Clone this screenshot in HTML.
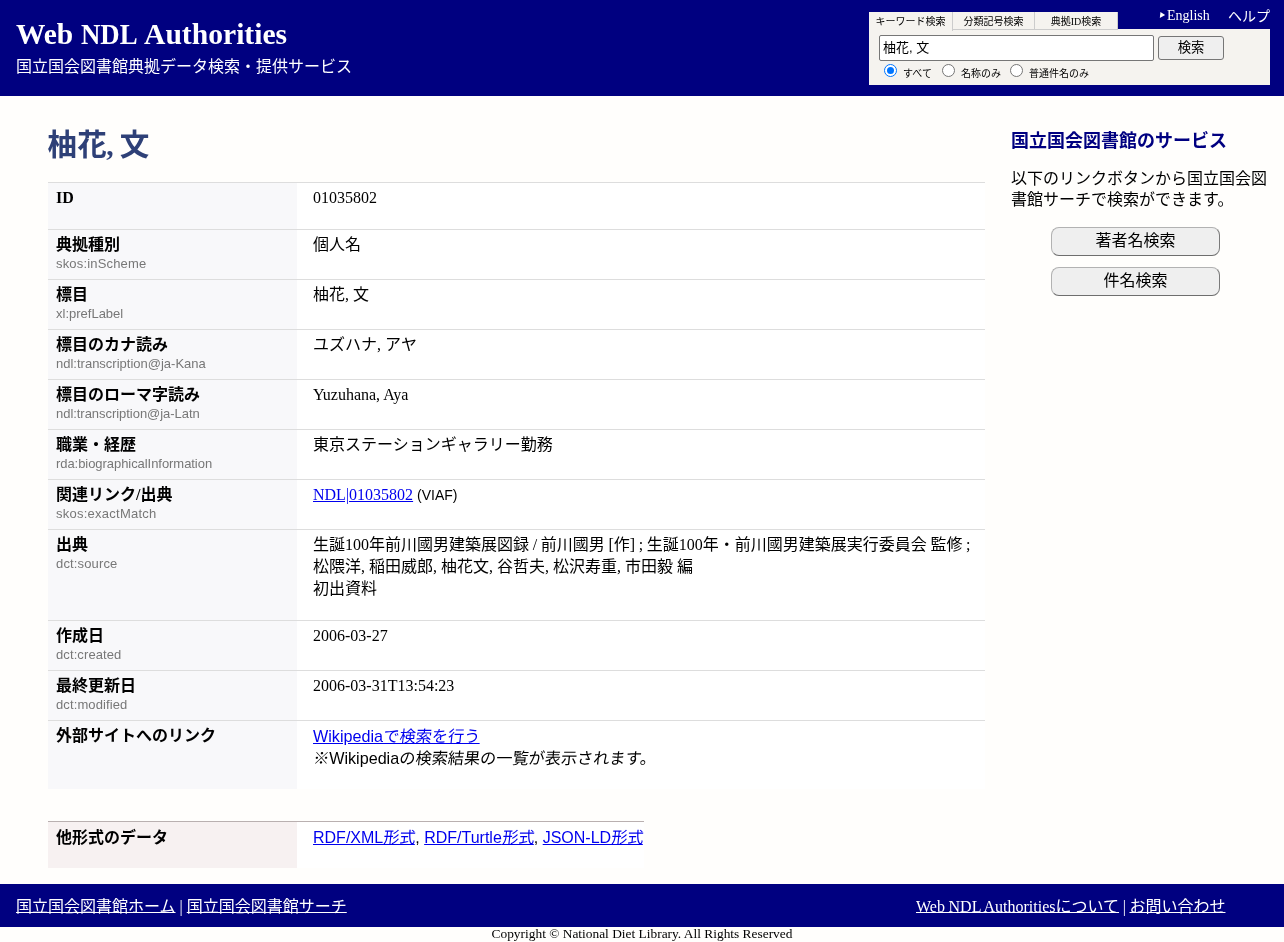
<!DOCTYPE html>
<html lang="ja">
<head>
<meta charset="utf-8">
<title>柚花, 文 - Web NDL Authorities</title>
<style>
html,body{margin:0;padding:0;}
body{width:1284px;height:942px;overflow:hidden;background:#fffefc;color:#000;
  font-family:"Liberation Serif","Noto Sans CJK JP",serif;font-size:16px;position:relative;}
i{font-style:normal;display:inline-block;transform:skewX(-6deg);transform-origin:0 70%;}
a i{text-decoration:underline;}
#wrap{position:absolute;left:0;top:0;width:1284px;height:942px;will-change:transform;}
a{color:#0000ee;text-decoration:underline;}
.sans{font-family:"Liberation Sans","Noto Sans CJK JP",sans-serif;}
#header{position:absolute;left:0;top:0;width:1284px;height:96px;background:#000080;}
#logo{position:absolute;left:16px;top:16px;color:#fff;font-weight:bold;font-size:30px;line-height:36px;letter-spacing:-0.4px;white-space:nowrap;}
#logo span{position:absolute;top:0;display:block;transform-origin:0 50%;letter-spacing:0;}
#lw{left:0;transform:scaleX(0.98);}
#ln{left:65.2px;transform:scaleX(0.894);}
#la{left:128.4px;transform:scaleX(0.987);}
#sub{position:absolute;left:16px;top:55px;color:#fff;font-size:16px;line-height:24px;white-space:nowrap;}
#toplinks{position:absolute;top:6px;left:1160px;color:#fff;font-size:14px;line-height:20px;white-space:nowrap;}
#toplinks span.en{position:absolute;left:7px;top:0;}
#toplinks span.help{position:absolute;left:68px;top:1px;}
#tri{position:absolute;left:0px;top:6px;width:0;height:0;border-left:5px solid #fff;border-top:3px solid transparent;border-bottom:3px solid transparent;}
#tabs{position:absolute;z-index:2;left:869px;top:12px;height:18px;font-size:10px;line-height:19px;}
#tabs div{position:absolute;top:0;height:18px;text-align:center;background:#f5f3ef;border-right:1px solid #ccc;border-bottom:1px solid #ccc;box-sizing:border-box;white-space:nowrap;}
#tabs div.on{border-bottom:none;height:19px;}
#sbox{position:absolute;left:869px;top:29px;width:401px;height:56px;background:#f5f3ef;}
#q{position:absolute;left:10px;top:6px;width:275px;height:26px;box-sizing:border-box;border:1px solid #767676;border-radius:2px;background:#fff;font-family:"Liberation Sans","Noto Sans CJK JP",sans-serif;font-size:13px;line-height:24px;padding-left:3px;}
#btn{position:absolute;left:289px;top:7px;width:66px;height:24px;box-sizing:border-box;border:1px solid #767676;border-radius:3px;background:#efefef;font-size:13.33px;line-height:22px;text-align:center;}
.radio{position:absolute;top:35px;width:13px;height:13px;box-sizing:border-box;border:1px solid #767676;border-radius:50%;background:#fff;}
.radio.on{border:1px solid #0075ff;}
.radio.on:after{content:"";position:absolute;left:2px;top:2px;width:7px;height:7px;border-radius:50%;background:#0075ff;}
.rl{position:absolute;top:38px;font-size:10px;line-height:14px;white-space:nowrap;}
h1{position:absolute;left:48px;top:124px;margin:0;font-size:29.6px;line-height:42px;color:#2e4077;font-weight:bold;white-space:nowrap;}
table{border-collapse:collapse;position:absolute;left:48px;}
#t1{top:182px;width:937px;}
th{width:233px;padding:4px 8px 6px 8px;text-align:left;vertical-align:top;background:#f8f8fa;border-top:1px solid #ddd;font-weight:bold;font-size:16px;line-height:22px;}
th small{display:block;font-family:"Liberation Sans",sans-serif;font-weight:normal;font-size:13px;line-height:16px;color:#777;margin-top:0px;}
td{background:#fff;padding:4px 8px 6px 16px;vertical-align:top;border-top:1px solid #ddd;font-size:16px;line-height:22px;}
#t2{top:821px;}
#t2 td{white-space:nowrap;padding-right:1px;}
#t2 th{background:#f7f1f1;border-top:1px solid #b9b0b0;padding-top:5px;padding-bottom:5px;}
#t2 td{border-top:1px solid #b9b0b0;padding-top:5px;padding-bottom:5px;}
#side{position:absolute;left:1011px;top:128px;width:262px;}
#side h2{margin:0;font-size:18px;line-height:26px;color:#000080;font-weight:bold;white-space:nowrap;}
#side p{margin:14px 0 0 0;font-size:16px;line-height:21px;}
.sbtn{position:absolute;left:40px;width:169px;height:29px;box-sizing:border-box;border:1px solid;border-color:#b2b2b2 #7a7a7a #6e6e6e #b2b2b2;border-radius:8px;background:#efefef;font-size:16px;line-height:25px;text-align:center;}
#footer{position:absolute;left:0;top:884px;width:1284px;height:43px;background:#000080;color:#fff;font-size:16px;line-height:46px;}
#footer a{color:#fff;text-underline-offset:0px;}
#fl{position:absolute;left:16px;top:0;white-space:nowrap;}
#fr{position:absolute;left:916px;top:0;white-space:nowrap;word-spacing:-0.4px;}
#copy{position:absolute;left:0;top:926px;width:1284px;text-align:center;font-size:13.4px;line-height:16px;font-family:"Liberation Serif",serif;}
</style>
</head>
<body>
<div id="wrap">
<div id="header">
  <div id="logo"><span id="lw">Web</span><span id="ln">NDL</span><span id="la">Authorities</span></div>
  <div id="sub">国立国会図書館典拠データ検索・提供サービス</div>
  <div id="toplinks"><i id="tri"></i><span class="en">English</span><span class="help">ヘルプ</span></div>
  <div id="tabs">
    <div class="on" style="left:0;width:84px;">キーワード検索</div>
    <div style="left:84px;width:82px;">分類記号検索</div>
    <div style="left:166px;width:83px;">典拠ID検索</div>
  </div>
  <div id="sbox">
    <div id="q">柚花, 文</div>
    <div id="btn">検索</div>
    <span class="radio on" style="left:15px;"></span><span class="rl" style="left:34px;">すべて</span>
    <span class="radio" style="left:73px;"></span><span class="rl" style="left:92px;">名称のみ</span>
    <span class="radio" style="left:141px;"></span><span class="rl" style="left:160px;">普通件名のみ</span>
  </div>
</div>

<h1 style="left:47.6px">柚花<span style="margin-left:-0.6px">,</span><span style="margin-left:-1.2px"> </span>文</h1>

<table id="t1">
<tr style="height:47px"><th>ID</th><td>01035802</td></tr>
<tr style="height:50px"><th>典拠種別<small style="letter-spacing:0.17px">skos:inScheme</small></th><td>個人名</td></tr>
<tr style="height:50px"><th>標目<small>xl:prefLabel</small></th><td>柚花, 文</td></tr>
<tr style="height:50px"><th>標目のカナ読み<small>ndl:transcription@ja-Kana</small></th><td>ユズハナ, アヤ</td></tr>
<tr style="height:50px"><th>標目のローマ字読み<small style="letter-spacing:-0.04px">ndl:transcription@ja-Latn</small></th><td>Yuzuhana, Aya</td></tr>
<tr style="height:50px"><th>職業・経歴<small style="letter-spacing:-0.055px">rda:biographicalInformation</small></th><td>東京ステーションギャラリー勤務</td></tr>
<tr style="height:50px"><th>関連リンク/出典<small style="letter-spacing:0.25px">skos:exactMatch</small></th><td><a>NDL|01035802</a> <span class="sans" style="font-size:14px">(VIAF)</span></td></tr>
<tr style="height:91px"><th>出典<small style="letter-spacing:0.15px">dct:source</small></th><td><span style="word-spacing:-0.35px">生誕100年前川國男建築展図録 / 前川國男 [作] ; 生誕100年・前川國男建築展実行委員会 監修 ;</span> 松隈洋, 稲田威郎, 柚花文, 谷哲夫, 松沢寿重, 市田毅 編<br>初出資料</td></tr>
<tr style="height:50px"><th>作成日<small style="letter-spacing:0.1px">dct:created</small></th><td>2006-03-27</td></tr>
<tr style="height:50px"><th>最終更新日<small style="letter-spacing:0.11px">dct:modified</small></th><td>2006-03-31T13:54:23</td></tr>
<tr style="height:68px"><th>外部サイトへのリンク</th><td class="sans" style="font-size:16.16px"><a>Wikipedia<i>で検索を行う</i></a><br><i>※</i>Wikipedia<i>の検索結果の一覧が表示されます。</i></td></tr>
</table>

<table id="t2">
<tr style="height:46px"><th>他形式のデータ</th><td class="sans"><a>RDF/XML<i>形式</i></a>, <a>RDF/Turtle<i>形式</i></a>, <a>JSON-LD<i>形式</i></a></td></tr>
</table>

<div id="side">
  <h2>国立国会図書館のサービス</h2>
  <p>以下のリンクボタンから国立国会図書館サーチで検索ができます。</p>
  <div class="sbtn" style="top:99px;">著者名検索</div>
  <div class="sbtn" style="top:139px;">件名検索</div>
</div>

<div id="footer">
  <div id="fl"><a>国立国会図書館ホーム</a> | <a>国立国会図書館サーチ</a></div>
  <div id="fr"><a>Web NDL Authoritiesについて</a> | <a>お問い合わせ</a></div>
</div>
<div id="copy">Copyright © National Diet Library. All Rights Reserved</div>
</div>
</body>
</html>
